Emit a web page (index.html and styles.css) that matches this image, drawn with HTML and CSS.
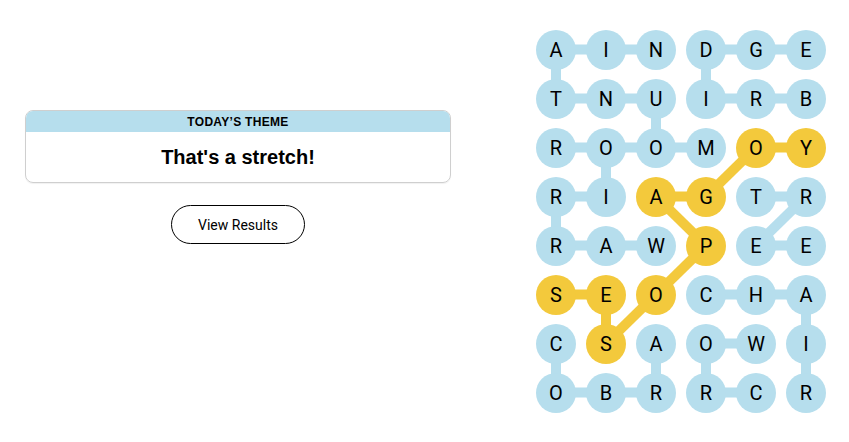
FILE: index.html
```html
<!DOCTYPE html>
<html lang="en">
<head>
    <meta charset="UTF-8">
    <meta name="viewport" content="width=device-width, initial-scale=1.0">
    <title>Strands</title>
    <link rel="stylesheet" href="styles.css">
</head>
<body>
    <div class="page">
        <div class="side">
            <div class="theme-card">
                <div class="theme-label">TODAY’S THEME</div>
                <div class="theme-clue">That's a stretch!</div>
            </div>
            <button class="results-btn">View Results</button>
        </div>

        <div class="board">
            <svg class="links" width="300" height="392" viewBox="0 0 300 392"></svg>
            <div class="grid"></div>
        </div>
    </div>

    <script>
        const letters = [
            'AINDGE',
            'TNUIRB',
            'ROOMOY',
            'RIAGTR',
            'RAWPEE',
            'SEOCHA',
            'CSAOWI',
            'OBRRCR'
        ];

        // cells that belong to the found word (row, col)
        const found = ['2,4', '2,5', '3,2', '3,3', '4,3', '5,0', '5,1', '5,2', '6,1'];

        const blueLinks = [
            [0,0,0,1], [0,1,0,2], [0,3,0,4], [0,4,0,5], [0,0,1,0], [0,3,1,3],
            [1,0,1,1], [1,1,1,2], [1,3,1,4], [1,4,1,5], [1,2,2,2],
            [2,0,2,1], [2,1,2,2], [2,2,2,3], [2,1,3,1],
            [3,0,3,1], [3,4,3,5], [3,0,4,0], [3,5,4,4],
            [4,0,4,1], [4,1,4,2], [4,4,4,5],
            [5,3,5,4], [5,4,5,5], [5,5,6,5],
            [6,0,7,0], [6,2,7,2], [6,3,6,4], [6,3,7,3], [6,5,7,5],
            [7,0,7,1], [7,1,7,2], [7,3,7,4]
        ];

        const wordLinks = [
            [2,5,2,4], [2,4,3,3], [3,3,3,2], [3,2,4,3],
            [4,3,5,2], [5,2,6,1], [6,1,5,1], [5,1,5,0]
        ];

        const grid = document.querySelector('.grid');
        const svg = document.querySelector('.links');

        letters.forEach((row, r) => {
            [...row].forEach((ch, c) => {
                const cell = document.createElement('div');
                cell.className = 'cell';
                const tile = document.createElement('span');
                tile.className = found.includes(r + ',' + c) ? 'tile found' : 'tile';
                tile.textContent = ch;
                cell.appendChild(tile);
                grid.appendChild(cell);
            });
        });

        const cx = c => 25 + c * 50;
        const cy = r => 24.5 + r * 49;

        function drawLinks(list, cls) {
            list.forEach(([r1, c1, r2, c2]) => {
                const line = document.createElementNS('http://www.w3.org/2000/svg', 'line');
                line.setAttribute('x1', cx(c1));
                line.setAttribute('y1', cy(r1));
                line.setAttribute('x2', cx(c2));
                line.setAttribute('y2', cy(r2));
                line.setAttribute('class', cls);
                svg.appendChild(line);
            });
        }

        drawLinks(blueLinks, 'link');
        drawLinks(wordLinks, 'link word');
    </script>
</body>
</html>
```

FILE: styles.css
```css
:root {
    --tile-blue: #b6deed;
    --tile-yellow: #f3c93c;
    --text-dark: #000000;
    --card-border: #cfcfcf;
}

body {
    margin: 0;
    font-family: 'Roboto', 'Liberation Sans', sans-serif;
    color: var(--text-dark);
    background-color: #ffffff;
}

.page {
    display: flex;
    align-items: flex-start;
    gap: 80px;
    padding: 25px 0 0 25px;
}

.side {
    display: flex;
    flex-direction: column;
    align-items: center;
    width: 426px;
    margin-top: 85px;
}

.theme-card {
    width: 100%;
    box-sizing: border-box;
    border: 1px solid var(--card-border);
    border-radius: 8px;
    overflow: hidden;
    box-shadow: 0 1px 1px rgba(0, 0, 0, 0.06);
}

.theme-label {
    height: 21px;
    line-height: 22px;
    text-align: center;
    background-color: var(--tile-blue);
    font-family: 'Liberation Sans', sans-serif;
    font-size: 12px;
    font-weight: 700;
    letter-spacing: 0.3px;
}

.theme-clue {
    height: 50px;
    line-height: 50px;
    text-align: center;
    font-family: 'Liberation Sans', sans-serif;
    font-size: 20px;
    font-weight: 700;
}

.results-btn {
    margin-top: 22px;
    width: 134px;
    height: 39px;
    border: 1px solid #000;
    border-radius: 20px;
    background: #fff;
    font-family: 'Roboto', sans-serif;
    font-size: 14px;
    color: #000;
    cursor: pointer;
}

.board {
    position: relative;
    width: 300px;
    height: 392px;
}

.links {
    position: absolute;
    top: 0;
    left: 0;
}

.link {
    stroke: var(--tile-blue);
    stroke-width: 10;
}

.link.word {
    stroke: var(--tile-yellow);
}

.grid {
    position: relative;
    display: grid;
    grid-template-columns: repeat(6, 50px);
    grid-template-rows: repeat(8, 49px);
}

.cell {
    display: flex;
    align-items: center;
    justify-content: center;
}

.tile {
    display: flex;
    align-items: center;
    justify-content: center;
    width: 40px;
    height: 40px;
    border-radius: 50%;
    background-color: var(--tile-blue);
    font-size: 20px;
}

.tile.found {
    background-color: var(--tile-yellow);
}
```
